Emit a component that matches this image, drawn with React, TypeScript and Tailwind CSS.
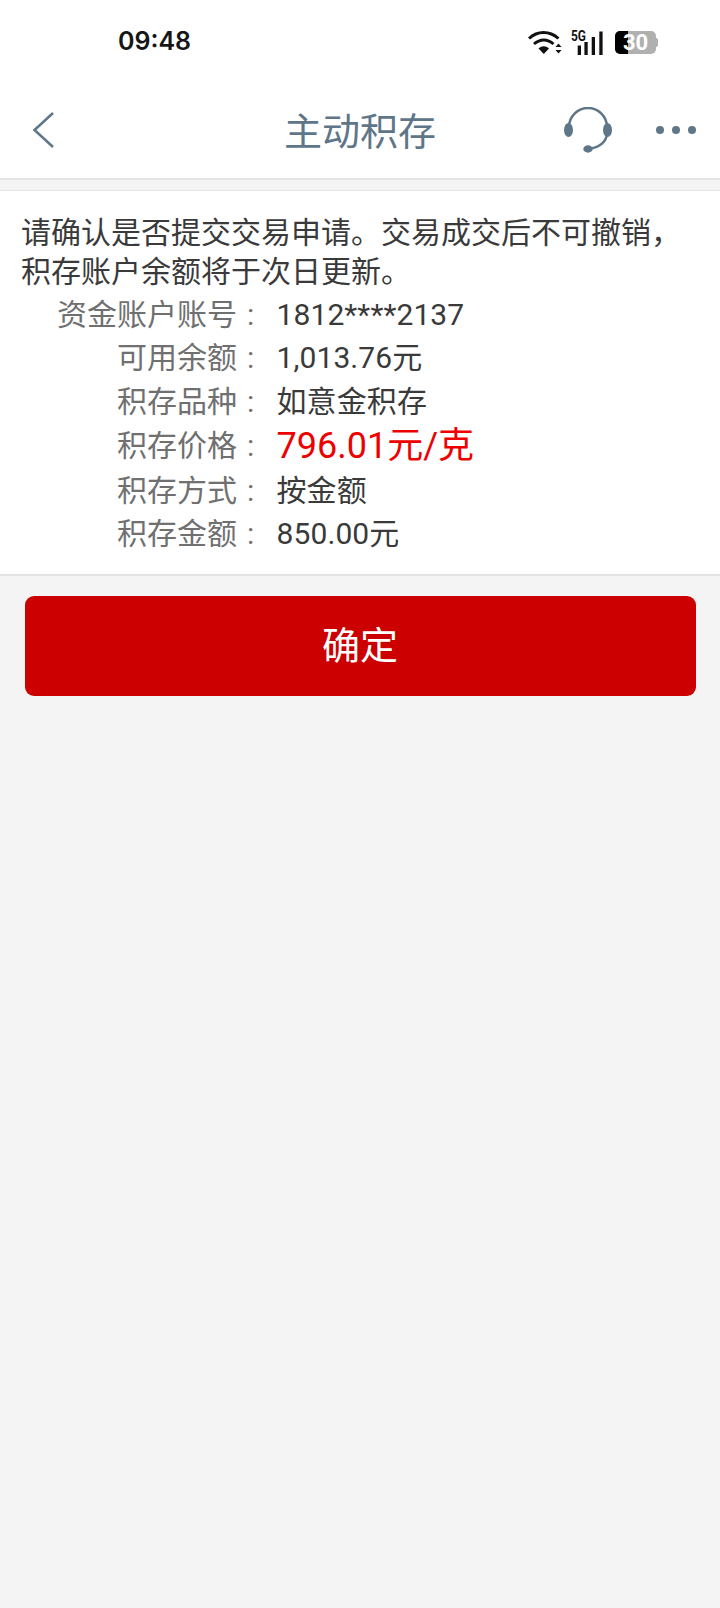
const cjk = "font-['Roboto','Noto_Sans_CJK_SC',sans-serif]";

const rows = [
  { label: "资金账户账号", value: "1812****2137", h: "h-[44px]" },
  { label: "可用余额", value: "1,013.76元", h: "h-[43px]" },
  { label: "积存品种", value: "如意金积存", h: "h-[44px]" },
  { label: "积存价格", value: "796.01元/克", h: "h-[45px]", price: true },
  { label: "积存方式", value: "按金额", h: "h-[44px]" },
  { label: "积存金额", value: "850.00元", h: "h-[43px]" },
];

const WifiIcon = () => (
  <svg width="34" height="25" viewBox="0 0 34 25" className="shrink-0">
    <path d="M1 8.5C9.5 0.5 21.5 0.5 30.5 8.5" fill="none" stroke="#111" strokeWidth="3" />
    <path d="M6 14C12 8.5 19.5 8.5 25.5 14" fill="none" stroke="#111" strokeWidth="3" />
    <path d="M10.5 18.5C14 15.5 17.5 15.5 21 18.5L15.8 24Z" fill="#111" />
    <path d="M27.5 17L30.5 13.5L33.5 17ZM27.5 20L30.5 23.5L33.5 20Z" fill="#111" />
  </svg>
);

const SignalIcon = () => (
  <svg width="32" height="29" viewBox="0 0 32 29" className="shrink-0">
    <text x="0" y="13" fontSize="14" fontWeight="700" fill="#111" fontFamily="Roboto, sans-serif" textLength="15" lengthAdjust="spacingAndGlyphs">5G</text>
    <rect x="6.7" y="17.5" width="3.3" height="9.5" fill="#111" />
    <rect x="13.4" y="14" width="3.3" height="13" fill="#111" />
    <rect x="20.7" y="9" width="3.3" height="18" fill="#111" />
    <rect x="28.3" y="3.5" width="3.3" height="23.5" fill="#111" />
  </svg>
);

const HeadsetIcon = () => (
  <svg width="48" height="46" viewBox="0 0 48 46" className="shrink-0">
    <path d="M5 20A19 19 0 0 1 43 20" fill="none" stroke="#5f7688" strokeWidth="2.5" />
    <path d="M43 26C43 34 36 40.5 26 41.5" fill="none" stroke="#5f7688" strokeWidth="2.5" />
    <ellipse cx="4.5" cy="23" rx="4.5" ry="7" fill="#5f7688" />
    <ellipse cx="43.5" cy="23" rx="4.5" ry="7" fill="#5f7688" />
    <ellipse cx="24" cy="42" rx="4.7" ry="3.7" fill="#5f7688" />
  </svg>
);

export default function App() {
  return (
    <div className={`min-h-[1608px] w-[720px] bg-[#f4f4f4] ${cjk}`}>
      {/* Status bar */}
      <div className="flex h-[82px] items-start justify-between bg-white pl-[118px] pr-[62px] pt-[25px]">
        <span className="font-['Inter',sans-serif] text-[25px] leading-[32px] font-semibold text-[#161616]">09:48</span>
        <div className="flex items-center pt-[3px]">
          <WifiIcon />
          <div className="ml-[9px]">
            <SignalIcon />
          </div>
          <div className="ml-[12px] flex items-center">
            <div className="relative flex h-[23px] w-[41px] overflow-hidden rounded-[5px] bg-[#b0b0b0]">
              <div className="h-full w-[13px] bg-black" />
              <span className="absolute inset-0 flex items-center justify-center text-[22px] leading-none font-bold text-white">30</span>
            </div>
            <div className="h-[9px] w-[2px] rounded-r-sm bg-[#b0b0b0]" />
          </div>
        </div>
      </div>

      {/* Header */}
      <div className="flex h-[96px] items-center bg-white px-[24px]">
        <div className="flex-1">
          <svg width="24" height="40" viewBox="0 0 24 40" className="ml-[7px]">
            <path d="M22 3L3.5 20L22 37" fill="none" stroke="#5f7688" strokeWidth="2.5" />
          </svg>
        </div>
        <h1 className="pt-[3px] text-[38px] leading-none font-normal text-[#5f7688]">主动积存</h1>
        <div className="flex flex-1 items-center justify-end gap-[44px]">
          <HeadsetIcon />
          <div className="flex gap-[8px]">
            <span className="size-[8px] rounded-full bg-[#5f7688]" />
            <span className="size-[8px] rounded-full bg-[#5f7688]" />
            <span className="size-[8px] rounded-full bg-[#5f7688]" />
          </div>
        </div>
      </div>

      <div className="h-[13px] border-t-2 border-b border-[#e4e4e4]" />

      {/* Confirmation panel */}
      <div className="border-b-2 border-[#e2e2e2] bg-white pl-[21px] pr-[20px] pt-[22px] pb-[19px]">
        <p className="text-[30px] leading-[39px] text-[#3a3a3a]">
          请确认是否提交交易申请。交易成交后不可撤销，积存账户余额将于次日更新。
        </p>
        <div className="pt-px">
          {rows.map((row) => (
            <div key={row.label} className={`flex items-center ${row.h}`}>
              <span className="w-[216px] text-right text-[30px] text-[#707070]">{row.label}</span>
              <span className="w-[39.5px] pl-[10px] text-[30px] text-[#707070]">:</span>
              <span className={row.price ? "text-[36px] text-[#ee0000]" : "text-[30px] tracking-[0.1px] text-[#3a3a3a]"}>{row.value}</span>
            </div>
          ))}
        </div>
      </div>

      <div className="px-[24.5px] pt-[20px]">
        <button className="flex h-[100px] w-full items-center justify-center rounded-[9px] bg-[#cc0000] text-[38px] text-white">
          确定
        </button>
      </div>
    </div>
  );
}
